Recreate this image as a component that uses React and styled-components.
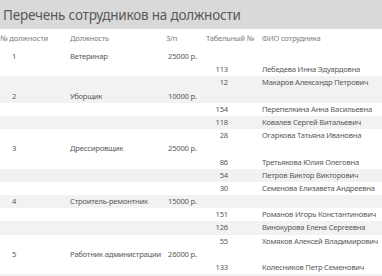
import React from "react";
import styled, { createGlobalStyle } from "styled-components";

const GlobalStyle = createGlobalStyle`
  html, body {
    margin: 0;
    padding: 0;
    background: #ffffff;
    overflow: hidden;
  }
  body {
    font-family: "Noto Sans", "Open Sans", "DejaVu Sans", sans-serif;
  }
`;

const groups = [
  {
    id: 1,
    title: "Ветеринар",
    salary: "25000 р.",
    staff: [
      { num: 113, name: "Лебедева Инна Эдуардовна" },
      { num: 12, name: "Макаров Александр Петрович" },
    ],
  },
  {
    id: 2,
    title: "Уборщик",
    salary: "10000 р.",
    staff: [
      { num: 154, name: "Перепелкина Анна Васильевна" },
      { num: 118, name: "Ковалев Сергей Витальевич" },
      { num: 28, name: "Огаркова Татьяна Ивановна" },
    ],
  },
  {
    id: 3,
    title: "Дрессировщик",
    salary: "25000 р.",
    staff: [
      { num: 86, name: "Третьякова Юлия Олеговна" },
      { num: 54, name: "Петров Виктор Викторович" },
      { num: 30, name: "Семенова Елизавета Андреевна" },
    ],
  },
  {
    id: 4,
    title: "Строитель-ремонтник",
    salary: "15000 р.",
    staff: [
      { num: 151, name: "Романов Игорь Константинович" },
      { num: 126, name: "Винокурова Елена Сергеевна" },
      { num: 55, name: "Хомяков Алексей Владимирович" },
    ],
  },
  {
    id: 5,
    title: "Работник администрации",
    salary: "26000 р.",
    staff: [
      { num: 133, name: "Колесников Петр Семенович" },
      { num: 47, name: "Соколова Марина Павловна" },
    ],
  },
];

const Report = styled.div`
  width: 382px;
  height: 276px;
  overflow: hidden;
  color: #595959;
`;

const TitleBar = styled.div`
  height: 29px;
  background: #d9d9d9;
  display: flex;
  align-items: center;
  padding-left: 3px;
`;

const Title = styled.h1`
  margin: 0;
  font-size: 13.5px;
  letter-spacing: -0.2px;
  font-weight: 400;
  color: #595959;
  white-space: nowrap;
`;

const Grid = styled.div`
  display: grid;
  grid-template-columns: 70px 96px 40px 22px 34px 116px;
  align-items: center;
  font-size: 7.6px;
  letter-spacing: -0.2px;
  white-space: nowrap;
`;

const HeadRow = styled(Grid)`
  height: 21px;
  align-items: start;
  padding-top: 4px;
  box-sizing: border-box;
  color: #808080;
`;

const Line = styled(Grid)`
  height: 13.2px;
  line-height: 13.2px;
  background: ${(p) => (p.$shade ? "#f2f2f2" : "#ffffff")};
`;

const Cell = styled.div`
  padding-left: ${(p) => p.$pad || 0}px;
  text-align: ${(p) => p.$align || "left"};
  overflow: ${(p) => (p.$clip ? "hidden" : "visible")};
`;

const Gap = styled.div``;

function Group({ group, index }) {
  return (
    <>
      <Line $shade={index % 2 === 1}>
        <Cell $pad={12}>{group.id}</Cell>
        <Cell>{group.title}</Cell>
        <Cell $pad={2}>{group.salary}</Cell>
      </Line>
      {group.staff.map((person, i) => (
        <Line key={person.num} $shade={i % 2 === 1}>
          <Gap />
          <Gap />
          <Gap />
          <Cell $align="right">{person.num}</Cell>
          <Gap />
          <Cell $clip>{person.name}</Cell>
        </Line>
      ))}
    </>
  );
}

export default function App() {
  return (
    <>
      <GlobalStyle />
      <Report>
        <TitleBar>
          <Title>Перечень сотрудников на должности</Title>
        </TitleBar>
        <HeadRow>
          <Cell>№ должности</Cell>
          <Cell>Должность</Cell>
          <Cell>З/п</Cell>
          <Cell>Табельный №</Cell>
          <Gap />
          <Cell>ФИО сотрудника</Cell>
        </HeadRow>
        {groups.map((group, index) => (
          <Group key={group.id} group={group} index={index} />
        ))}
      </Report>
    </>
  );
}
